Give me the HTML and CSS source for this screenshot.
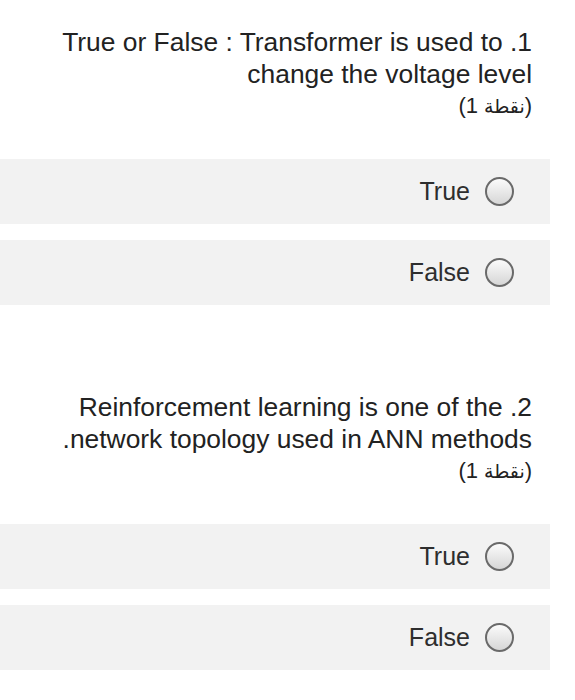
FILE: index.html
```html
<!DOCTYPE html>
<html lang="ar">
<head>
<meta charset="utf-8">
<title>Quiz</title>
<link rel="stylesheet" href="styles.css">
</head>
<body>
<main class="form">
  <section class="question">
    <div class="title">
      <div class="line">True or False : Transformer is used to .1</div>
      <div class="line">change the voltage level</div>
      <div class="points"><span class="num">(1</span><span class="ar">نقطة</span><span class="num">)</span></div>
    </div>
    <div class="options">
      <label class="option"><span class="label">True</span><span class="radio"></span></label>
      <label class="option"><span class="label">False</span><span class="radio"></span></label>
    </div>
  </section>
  <section class="question">
    <div class="title">
      <div class="line">Reinforcement learning is one of the .2</div>
      <div class="line">.network topology used in ANN methods</div>
      <div class="points"><span class="num">(1</span><span class="ar">نقطة</span><span class="num">)</span></div>
    </div>
    <div class="options">
      <label class="option"><span class="label">True</span><span class="radio"></span></label>
      <label class="option"><span class="label">False</span><span class="radio"></span></label>
    </div>
  </section>
</main>
</body>
</html>
```
FILE: styles.css
```css
html, body {
  margin: 0;
  padding: 0;
  background: #ffffff;
}
body {
  font-family: "Liberation Sans", "DejaVu Sans", Arial, sans-serif;
  color: #222222;
}
.form {
  padding-right: 25px;
  display: flex;
  flex-direction: column;
  gap: 60px;
}
.question {
  display: flex;
  flex-direction: column;
}
.title {
  padding: 26px 18px 0 0;
  text-align: right;
  direction: ltr;
}
.line {
  font-size: 26.4px;
  line-height: 32px;
  white-space: nowrap;
}
.points {
  display: flex;
  justify-content: flex-end;
  align-items: baseline;
  font-size: 22px;
  line-height: 32px;
  direction: ltr;
}
.num {
  font-size: 22px;
}
.ar {
  margin-left: 6px;
  font-family: "DejaVu Sans", sans-serif;
  font-size: 19px;
}
.options {
  margin-top: 37px;
  display: flex;
  flex-direction: column;
  gap: 16px;
}
.option {
  height: 65px;
  background: #f2f2f2;
  display: flex;
  justify-content: flex-end;
  align-items: center;
  gap: 15px;
  padding-right: 36px;
}
.label {
  font-size: 25px;
  color: #2e2e2e;
}
.radio {
  width: 29px;
  height: 29px;
  box-sizing: border-box;
  border-radius: 50%;
  border: 2px solid #6a6a6a;
  background: linear-gradient(#fbfbfb, #d6d6d6);
}
```
